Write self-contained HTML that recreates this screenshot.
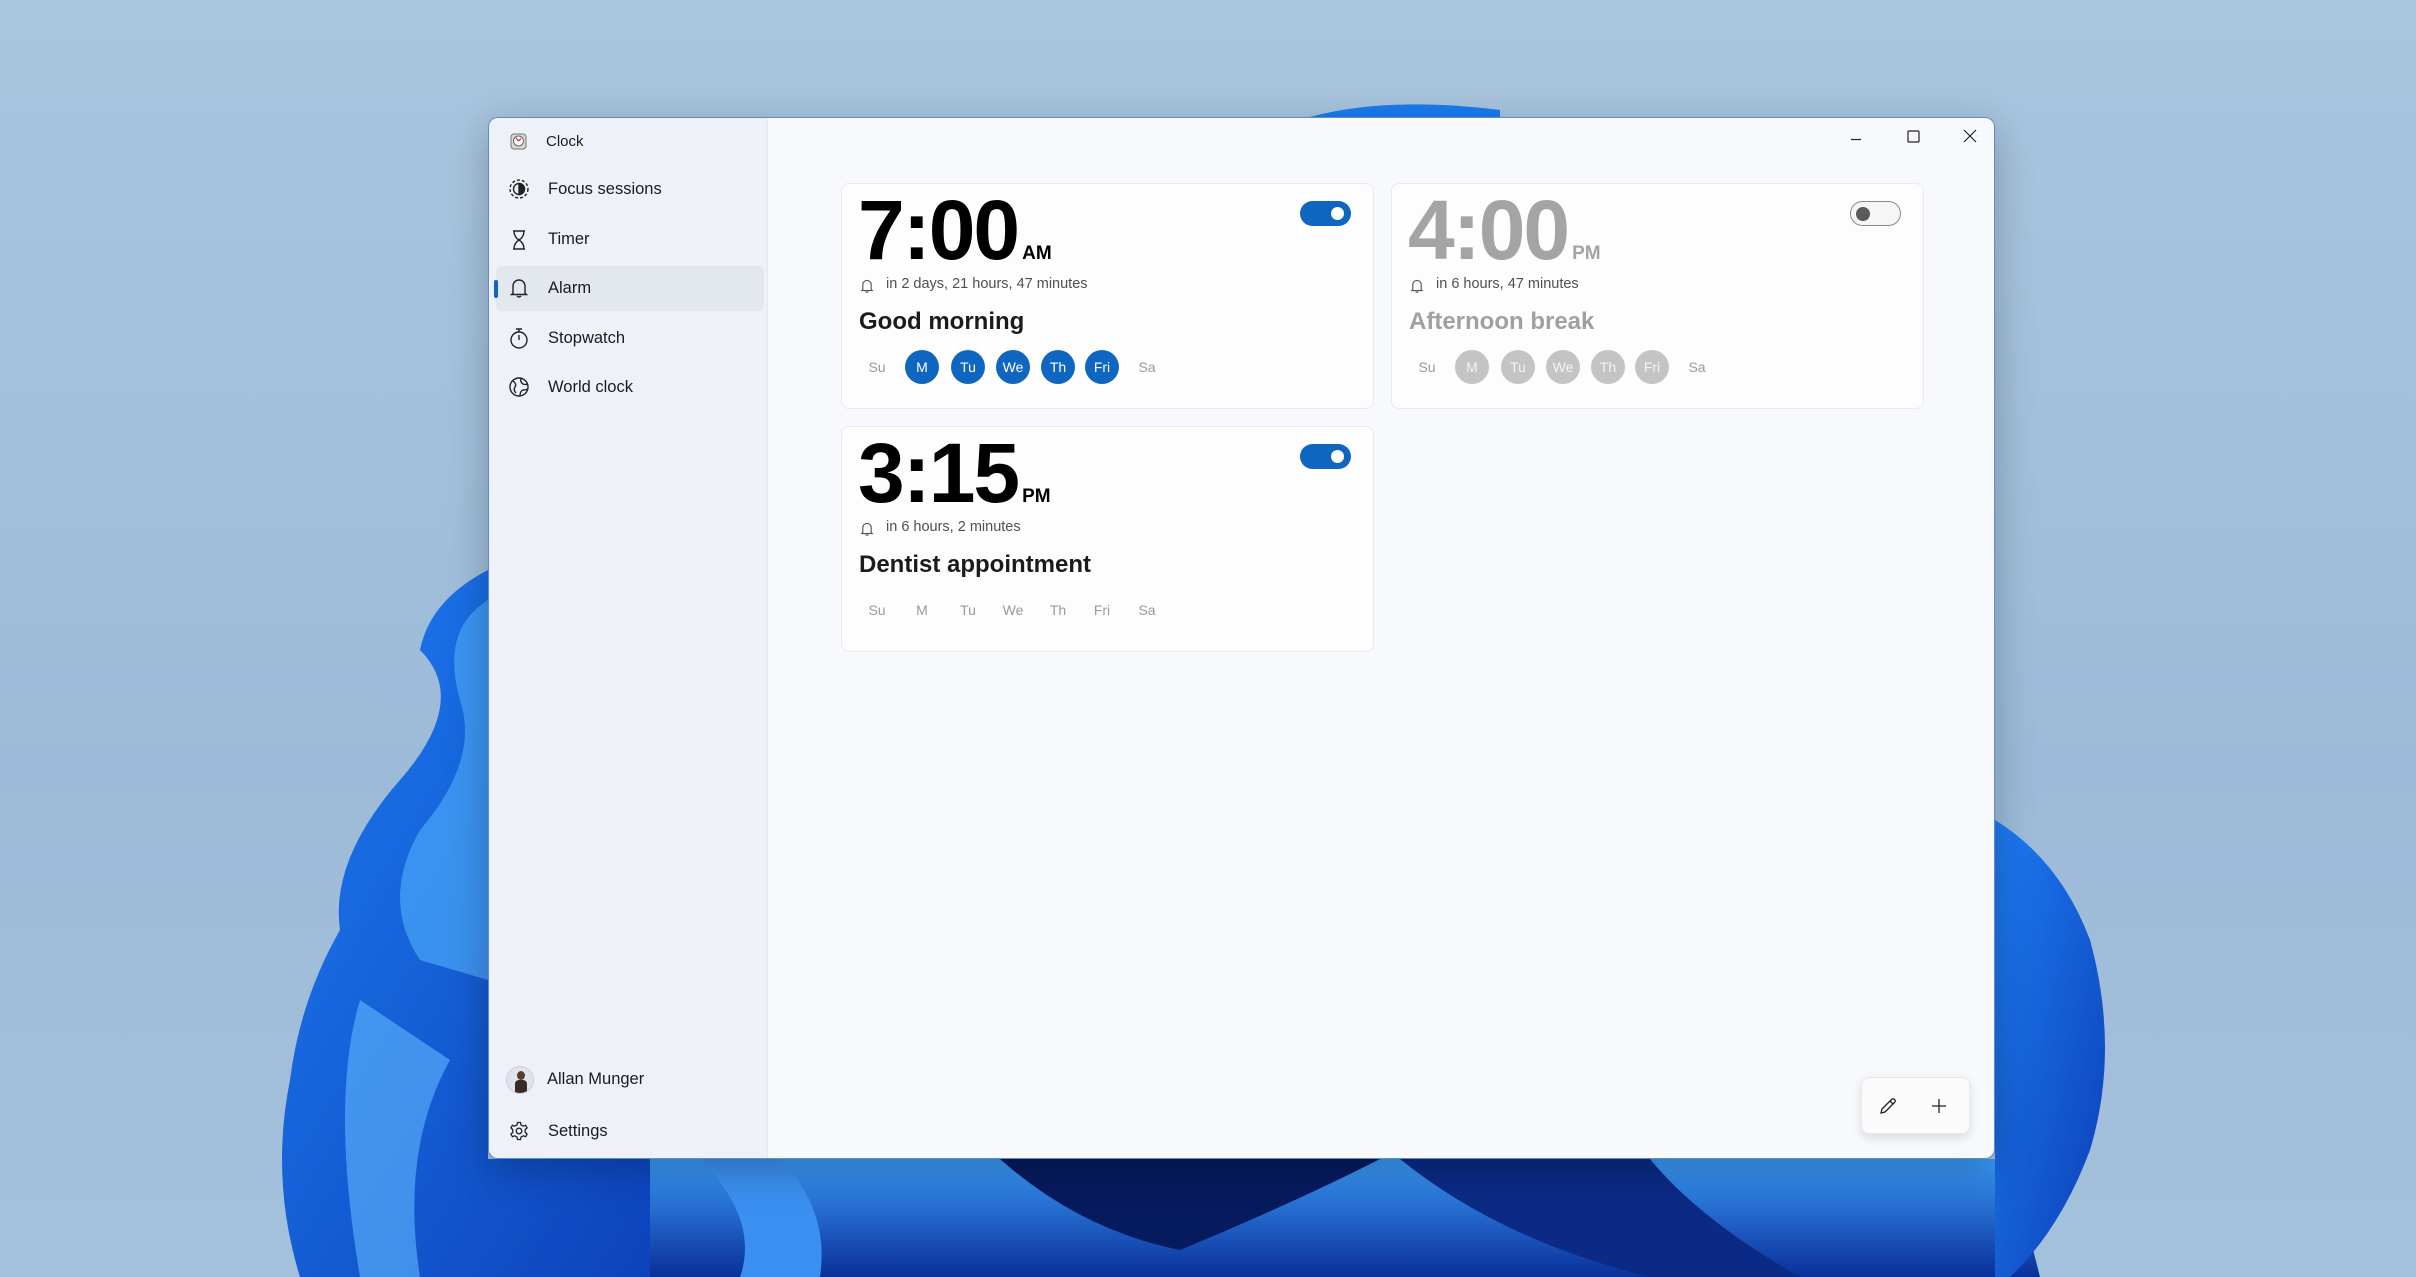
<!DOCTYPE html>
<html><head><meta charset="utf-8"><style>
*{margin:0;padding:0;box-sizing:border-box}
body{width:2416px;height:1277px;overflow:hidden;position:relative;font-family:"Segoe UI","Liberation Sans",sans-serif;background:linear-gradient(180deg,#a9c6df 0%,#9dbbd8 60%,#a4c1dc 100%)}
.bg{position:absolute;left:0;top:0}
.win{position:absolute;left:488px;top:117px;width:1507px;height:1042px;border-radius:10px;overflow:hidden;background:#f7f9fc;box-shadow:0 10px 40px rgba(0,0,0,.25);border:1px solid #5f8fbf}
.side{position:absolute;left:0;top:0;width:279px;height:100%;background:#eef2f8;border-right:1px solid #e3e7ee}
.t{position:absolute;color:#1b1b1b;white-space:nowrap}
.nav{font-size:16.5px;top:2px}
.ic{position:absolute}
.card{position:absolute;width:533px;height:226px;background:#fdfdfe;border:1px solid #e8eaee;border-radius:8px}
.time{position:absolute;left:16px;top:4px;font-size:84px;font-weight:600;letter-spacing:-2px;line-height:1}
.ampm{font-size:19px;font-weight:700;letter-spacing:0;margin-left:4px}
.in{position:absolute;left:44px;top:92px;font-size:14.5px;color:#505050}
.bell{position:absolute;left:18px;top:94px}
.name{position:absolute;left:17px;top:124px;font-size:24px;font-weight:600}
.days{position:absolute;left:13px;top:166px}
.d{position:absolute;width:34px;height:34px;border-radius:50%;text-align:center;line-height:34px;font-size:14px;color:#9a9a9a;top:0}
.on{background:#0f66c0;color:#fff}
.off{background:#c4c4c4;color:#f4f4f4}
.tog{position:absolute;top:17px;right:22px;width:51px;height:25px;border-radius:13px}
</style></head><body>
<svg class="bg" width="2416" height="1277" viewBox="0 0 2416 1277">
<defs>
<linearGradient id="g1" x1="0" y1="0" x2="1" y2="1"><stop offset="0" stop-color="#1e7cf2"/><stop offset="1" stop-color="#0b3fb8"/></linearGradient>
<linearGradient id="g2" x1="0" y1="0" x2="0" y2="1"><stop offset="0" stop-color="#3a9af7"/><stop offset="1" stop-color="#0a2f9a"/></linearGradient>
</defs>
<path d="M1300 120 Q1380 95 1500 110 L1500 140 L1300 140Z" fill="#1a7cf0"/>
<path d="M488 570 Q430 600 420 650 Q470 700 400 780 Q330 860 340 930 Q300 1000 290 1080 Q270 1180 300 1277 L700 1277 L700 1159 L488 1159Z" fill="url(#g1)"/>
<path d="M488 600 Q440 630 460 700 Q480 760 420 830 Q380 900 420 960 L488 980Z" fill="#4aa6f8" opacity=".7"/>
<path d="M360 1000 Q330 1100 360 1277 L420 1277 Q400 1150 450 1060Z" fill="#62b8ff" opacity=".6"/>
<path d="M650 1159 L2010 1159 L2040 1277 L650 1277Z" fill="url(#g2)"/>
<path d="M1000 1159 Q1080 1230 1180 1250 Q1300 1200 1380 1159Z" fill="#061a5e"/>
<path d="M1400 1159 Q1500 1240 1650 1277 L1800 1277 Q1700 1220 1650 1159Z" fill="#0a2a85"/>
<path d="M700 1159 Q760 1220 740 1277 L820 1277 Q830 1210 780 1159Z" fill="#3b8ff0"/>
<path d="M1995 820 Q2060 860 2090 940 Q2120 1050 2090 1150 Q2060 1230 2010 1277 L1995 1277Z" fill="url(#g1)"/>
</svg>

<div class="win">
<div class="side">
 <svg class="ic" style="left:20px;top:13px" width="20" height="20" viewBox="0 0 20 20"><rect x="2" y="3" width="15" height="15" rx="3" fill="#d8d8d8" stroke="#777"/><circle cx="9.5" cy="10" r="5" fill="#fff" stroke="#666"/><path d="M9.5 10 L7 7 M9.5 10 L12 7.5" stroke="#c33" stroke-width="1.3"/></svg>
 <div class="t" style="left:57px;top:15px;font-size:15px">Clock</div>

 <svg class="ic" style="left:19px;top:60px" width="22" height="22" viewBox="0 0 22 22" fill="none" stroke="#222" stroke-width="1.4"><circle cx="11" cy="11" r="9" stroke-dasharray="3 2"/><circle cx="11" cy="11" r="5.5"/><path d="M11 5.5 A5.5 5.5 0 0 1 11 16.5Z" fill="#222"/></svg>
 <div class="t nav" style="left:59px;top:62px">Focus sessions</div>

 <svg class="ic" style="left:21px;top:111px" width="18" height="22" viewBox="0 0 18 22" fill="none" stroke="#222" stroke-width="1.4"><path d="M3 2 H15 M3 20 H15 M4 2 Q4 8 9 11 Q14 8 14 2 M4 20 Q4 14 9 11 Q14 14 14 20"/></svg>
 <div class="t nav" style="left:59px;top:112px">Timer</div>

 <div style="position:absolute;left:7px;top:148px;width:268px;height:45px;background:#e3e7ee;border-radius:6px"></div>
 <div style="position:absolute;left:5px;top:162px;width:4px;height:18px;background:#0f66c0;border-radius:2px"></div>
 <svg class="ic" style="left:20px;top:159px" width="20" height="22" viewBox="0 0 20 22" fill="none" stroke="#222" stroke-width="1.4"><path d="M4 16 V9 A6 6 0 0 1 16 9 V16 L17.5 17.5 H2.5Z M8 19 Q10 21 12 19"/></svg>
 <div class="t nav" style="left:59px;top:161px">Alarm</div>

 <svg class="ic" style="left:19px;top:208px" width="22" height="24" viewBox="0 0 22 24" fill="none" stroke="#222" stroke-width="1.4"><circle cx="11" cy="14" r="8"/><path d="M8 3 H14 M11 3 V6 M11 14 V9"/></svg>
 <div class="t nav" style="left:59px;top:211px">Stopwatch</div>

 <svg class="ic" style="left:19px;top:258px" width="22" height="22" viewBox="0 0 22 22" fill="none" stroke="#222" stroke-width="1.4"><circle cx="11" cy="11" r="9"/><path d="M5 5 Q9 8 7 11 Q5 14 8 17 M13 2.5 Q12 6 15 8 Q18 9 19.5 8 M12 20 Q12 15 15 14 Q18 14 19 13"/></svg>
 <div class="t nav" style="left:59px;top:260px">World clock</div>

 <div style="position:absolute;left:17px;top:948px;width:28px;height:28px;border-radius:50%;background:#dfe5ee;border:1px solid #c9d1dc;overflow:hidden"><div style="position:absolute;left:10px;top:4px;width:8px;height:9px;border-radius:50%;background:#5a3c2a"></div><div style="position:absolute;left:8px;top:13px;width:12px;height:16px;background:#3a2a22;border-radius:4px"></div></div>
 <div class="t nav" style="left:58px;top:952px">Allan Munger</div>
 <svg class="ic" style="left:20px;top:1003px" width="20" height="20" viewBox="0 0 20 20" fill="none" stroke="#222" stroke-width="1.3"><circle cx="10" cy="10" r="2.8"/><path d="M8.5 1.5 H11.5 L12 4 L14.3 5.2 L16.6 4.3 L18.1 6.9 L16.2 8.6 V11.4 L18.1 13.1 L16.6 15.7 L14.3 14.8 L12 16 L11.5 18.5 H8.5 L8 16 L5.7 14.8 L3.4 15.7 L1.9 13.1 L3.8 11.4 V8.6 L1.9 6.9 L3.4 4.3 L5.7 5.2 L8 4Z"/></svg>
 <div class="t nav" style="left:59px;top:1004px">Settings</div>
</div>

<svg class="ic" style="left:1357px;top:11px" width="20" height="20" viewBox="0 0 20 20" stroke="#222" stroke-width="1.2" fill="none"><path d="M5 10.5 H15"/></svg>
<svg class="ic" style="left:1414px;top:8px" width="20" height="20" viewBox="0 0 20 20" stroke="#222" stroke-width="1.2" fill="none"><rect x="5" y="5" width="11" height="11" rx="1"/></svg>
<svg class="ic" style="left:1471px;top:8px" width="20" height="20" viewBox="0 0 20 20" stroke="#222" stroke-width="1.2" fill="none"><path d="M4 4 L16 16 M16 4 L4 16"/></svg>

<div class="card" style="left:352px;top:65px">
 <div class="time">7:00<span class="ampm">AM</span></div>
 <svg class="bell" width="14" height="16" viewBox="0 0 20 22" fill="none" stroke="#555" stroke-width="1.6"><path d="M4 16 V9 A6 6 0 0 1 16 9 V16 L17.5 17.5 H2.5Z M8 19 Q10 21 12 19"/></svg>
 <div class="t in">in 2 days, 21 hours, 47 minutes</div>
 <div class="t name">Good morning</div>
 <div class="days">
  <div class="d" style="left:5px">Su</div><div class="d on" style="left:50px">M</div><div class="d on" style="left:96px">Tu</div><div class="d on" style="left:141px">We</div><div class="d on" style="left:186px">Th</div><div class="d on" style="left:230px">Fri</div><div class="d" style="left:275px">Sa</div>
 </div>
 <div class="tog" style="background:#0f66c0"><div style="position:absolute;right:7px;top:6px;width:13px;height:13px;border-radius:50%;background:#fff"></div></div>
</div>

<div class="card" style="left:902px;top:65px">
 <div class="time" style="color:#a4a4a4">4:00<span class="ampm">PM</span></div>
 <svg class="bell" width="14" height="16" viewBox="0 0 20 22" fill="none" stroke="#555" stroke-width="1.6"><path d="M4 16 V9 A6 6 0 0 1 16 9 V16 L17.5 17.5 H2.5Z M8 19 Q10 21 12 19"/></svg>
 <div class="t in">in 6 hours, 47 minutes</div>
 <div class="t name" style="color:#a0a0a0">Afternoon break</div>
 <div class="days">
  <div class="d" style="left:5px">Su</div><div class="d off" style="left:50px">M</div><div class="d off" style="left:96px">Tu</div><div class="d off" style="left:141px">We</div><div class="d off" style="left:186px">Th</div><div class="d off" style="left:230px">Fri</div><div class="d" style="left:275px">Sa</div>
 </div>
 <div class="tog" style="background:#f6f6f6;border:1.5px solid #8a8a8a"><div style="position:absolute;left:5px;top:4.5px;width:14px;height:14px;border-radius:50%;background:#5a5a5a"></div></div>
</div>

<div class="card" style="left:352px;top:308px">
 <div class="time">3:15<span class="ampm">PM</span></div>
 <svg class="bell" width="14" height="16" viewBox="0 0 20 22" fill="none" stroke="#555" stroke-width="1.6"><path d="M4 16 V9 A6 6 0 0 1 16 9 V16 L17.5 17.5 H2.5Z M8 19 Q10 21 12 19"/></svg>
 <div class="t in">in 6 hours, 2 minutes</div>
 <div class="t name">Dentist appointment</div>
 <div class="days">
  <div class="d" style="left:5px">Su</div><div class="d" style="left:50px">M</div><div class="d" style="left:96px">Tu</div><div class="d" style="left:141px">We</div><div class="d" style="left:186px">Th</div><div class="d" style="left:230px">Fri</div><div class="d" style="left:275px">Sa</div>
 </div>
 <div class="tog" style="background:#0f66c0"><div style="position:absolute;right:7px;top:6px;width:13px;height:13px;border-radius:50%;background:#fff"></div></div>
</div>

<div style="position:absolute;left:1372px;top:959px;width:109px;height:57px;background:#fbfbfc;border:1px solid #e6e8ec;border-radius:8px;box-shadow:0 4px 10px rgba(0,0,0,.12)">
 <svg class="ic" style="left:16px;top:18px" width="20" height="20" viewBox="0 0 20 20" fill="none" stroke="#222" stroke-width="1.3"><path d="M3 17 L4 13 L13.5 3.5 Q15 2 16.5 3.5 Q18 5 16.5 6.5 L7 16Z M12 5 L15 8"/></svg>
 <svg class="ic" style="left:67px;top:18px" width="20" height="20" viewBox="0 0 20 20" fill="none" stroke="#222" stroke-width="1.3"><path d="M10 3 V17 M3 10 H17"/></svg>
</div>
</div>
</body></html>
